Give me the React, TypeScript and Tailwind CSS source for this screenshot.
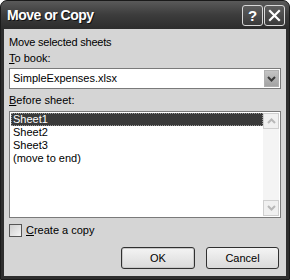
export default function App() {
  return (
    <div className="w-[290px] h-[280px] bg-white font-['Liberation_Sans',Arial,sans-serif] text-[11px] text-black">
      <div className="w-[290px] h-[280px] flex flex-col rounded-t-[7px] bg-[#2e2e2e] border border-[#1a1a1a] overflow-hidden">
        {/* title bar */}
        <div className="h-[28px] shrink-0 flex items-center pl-[6px] pr-[4px] bg-gradient-to-b from-[#5a5a5a] via-[#3c3c3c] to-[#2c2c2c]">
          <span className="flex-1 text-white font-bold text-[14px] tracking-[-0.5px] [text-shadow:1px_1px_0_#111]">
            Move or Copy
          </span>
          <div className="flex gap-[1px] mt-[1px]">
            <div className="w-[21px] h-[21px] rounded-[3px] border border-[#d8d8d8] bg-gradient-to-b from-[#5e5e5e] to-[#3a3a3a] flex items-center justify-center text-white font-bold text-[15px] leading-none">
              ?
            </div>
            <div className="w-[21px] h-[21px] rounded-[3px] border border-[#d8d8d8] bg-gradient-to-b from-[#5e5e5e] to-[#3a3a3a] flex items-center justify-center">
              <svg width="13" height="13" viewBox="0 0 13 13">
                <path d="M2 2 L11 11 M11 2 L2 11" stroke="white" strokeWidth="2.2" strokeLinecap="square" />
              </svg>
            </div>
          </div>
        </div>
        {/* client area */}
        <div className="flex-1 mx-[3px] mb-[3px] bg-[#d5d5d5] flex flex-col px-[5px] pt-[7px]">
          <div className="h-[13px] leading-[13px] tracking-[-0.2px]">Move selected sheets</div>
          <div className="h-[13px] leading-[13px] mt-[3px]">
            <span className="underline">T</span>o book:
          </div>
          <div className="mt-[3px] h-[21px] border border-[#7a7a7a] bg-white flex items-center pr-[1px]">
            <span className="flex-1 pl-[3px] text-[11px]">SimpleExpenses.xlsx</span>
            <div className="w-[15px] h-[17px] bg-gradient-to-b from-[#c4c4c4] to-[#a4a4a4] border border-[#b0b0b0] flex items-center justify-center">
              <svg width="9" height="6" viewBox="0 0 9 6">
                <path d="M1 1 L4.5 4.5 L8 1" stroke="#3a3a3a" strokeWidth="2" fill="none" />
              </svg>
            </div>
          </div>
          <div className="h-[13px] leading-[13px] mt-[5px]">
            <span className="underline">B</span>efore sheet:
          </div>
          <div className="mt-[4px] h-[107px] border border-[#7a7a7a] bg-white flex pl-[1px] py-[1px] pr-[1px]">
            <div className="flex-1 flex flex-col text-[11px]">
              <div className="h-[13px] leading-[13px] bg-[#3a3a3a] text-white pl-[2px] outline-1 outline-dotted outline-[#999] -outline-offset-1">Sheet1</div>
              <div className="h-[13px] leading-[13px] pl-[2px]">Sheet2</div>
              <div className="h-[13px] leading-[13px] pl-[2px]">Sheet3</div>
              <div className="h-[13px] leading-[13px] pl-[2px]">(move to end)</div>
            </div>
            <div className="w-[16px] flex flex-col justify-between bg-[#f4f4f4]">
              <div className="h-[16px] border border-[#cfcfcf] bg-[#f0f0f0] flex items-center justify-center">
                <svg width="9" height="6" viewBox="0 0 9 6">
                  <path d="M1 5 L4.5 1.5 L8 5" stroke="#b8b8b8" strokeWidth="2" fill="none" />
                </svg>
              </div>
              <div className="h-[16px] border border-[#cfcfcf] bg-[#f0f0f0] flex items-center justify-center">
                <svg width="9" height="6" viewBox="0 0 9 6">
                  <path d="M1 1 L4.5 4.5 L8 1" stroke="#b8b8b8" strokeWidth="2" fill="none" />
                </svg>
              </div>
            </div>
          </div>
          <div className="mt-[5px] flex items-center gap-[4px] h-[14px]">
            <div className="w-[13px] h-[13px] border border-[#555] bg-gradient-to-br from-[#cfcfcf] to-[#f4f4f4]" />
            <span className="text-[11px]">
              <span className="underline">C</span>reate a copy
            </span>
          </div>
          <div className="mt-[10px] flex justify-end gap-[11px] pr-[2px]">
            <div className="w-[74px] h-[22px] rounded-[3px] border border-[#303030] bg-gradient-to-b from-[#f4f4f4] to-[#dadada] shadow-[inset_0_0_0_1px_#c8c8c8] flex items-center justify-center text-[11px]">
              OK
            </div>
            <div className="w-[73px] h-[22px] rounded-[3px] border border-[#303030] bg-gradient-to-b from-[#f4f4f4] to-[#dadada] flex items-center justify-center text-[11px]">
              Cancel
            </div>
          </div>
        </div>
      </div>
    </div>
  );
}
